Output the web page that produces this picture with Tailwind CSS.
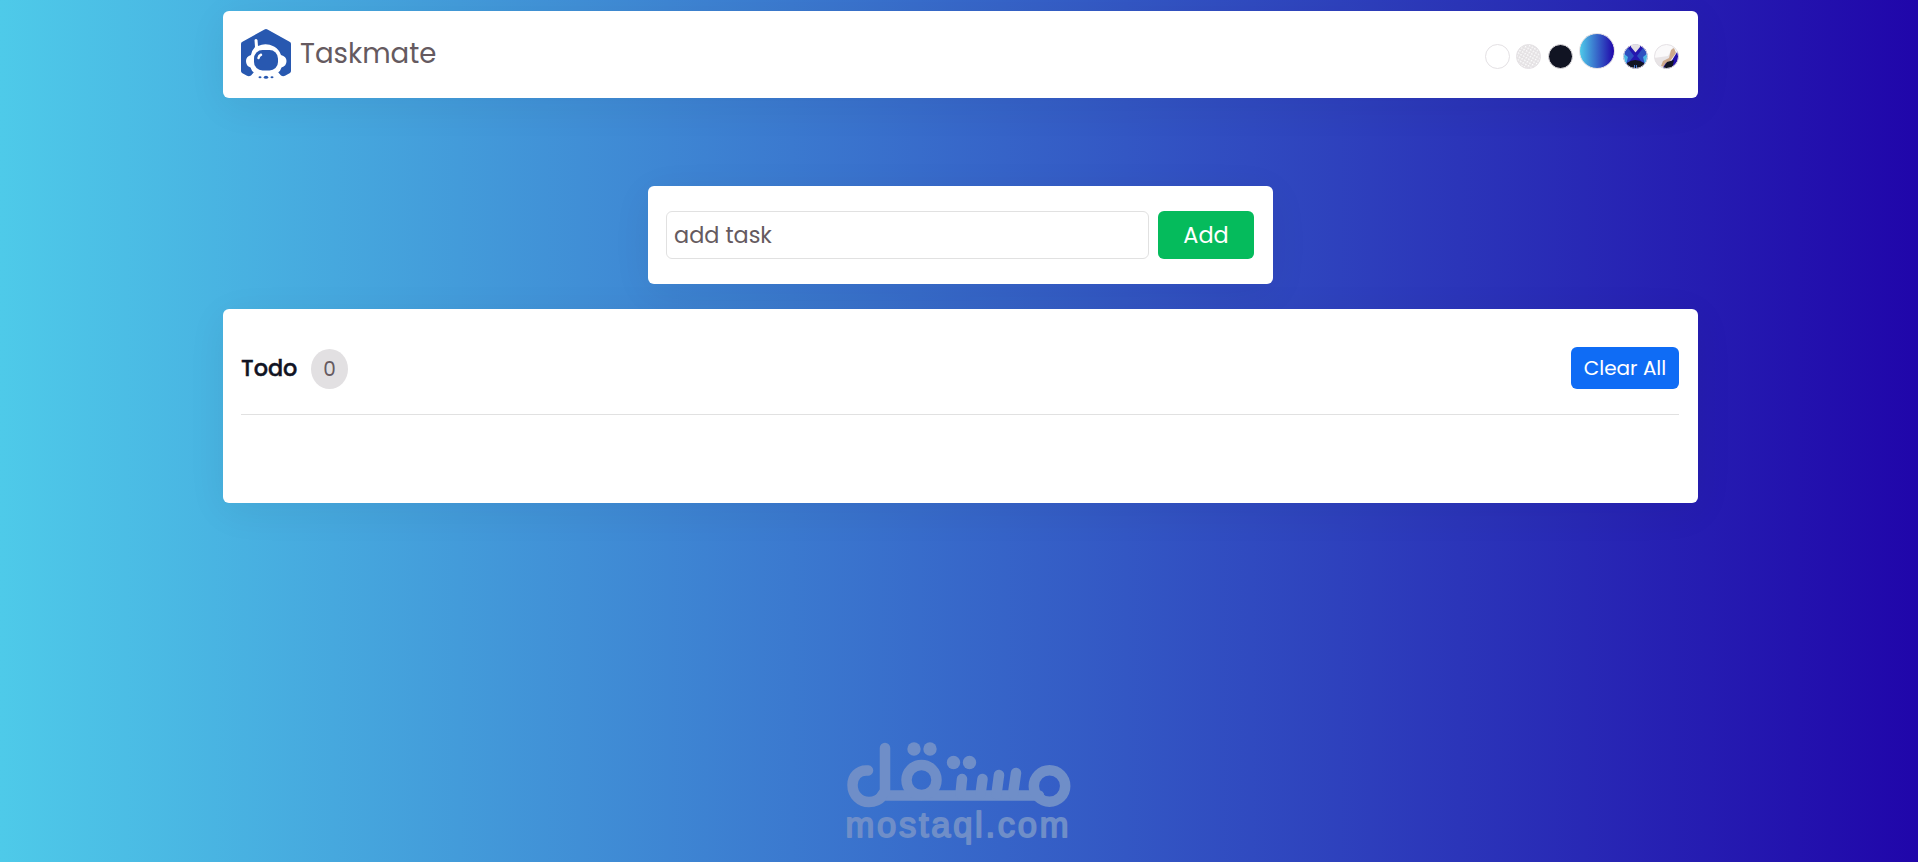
<!DOCTYPE html>
<html lang="en">
<head>
    <meta charset="UTF-8">
    <meta name="viewport" content="width=device-width, initial-scale=1.0">
    <title>Taskmate</title>
    <script src="https://cdn.jsdelivr.net/npm/@tailwindcss/browser@4"></script>
</head>
<body class="h-screen overflow-hidden bg-linear-to-r/srgb from-[#4ecae9] to-[#2006aa] pt-[11px] font-['Poppins','Inter',sans-serif]">
    <div class="ml-[223px] w-[1475px] flex flex-col">
        <!-- Header -->
        <header class="h-[87px] bg-white rounded-[6px] pl-[18px] pr-[19px] flex items-center justify-between shadow-[0_8px_40px_rgba(17,20,35,0.06)]">
            <div class="flex items-center pb-0.5">
                <svg class="w-[50px] h-[50px]" viewBox="0 0 50 50">
                    <path fill="#2858b0" d="M23.500 0.500 Q25 -0.300 26.500 0.500 L49 13 Q50 13.700 50 15 V42 Q50 43.200 49 43.900 L44 46.800 Q42 47.800 40 46.500 L36 42 H14 L10 46.500 Q8 47.800 6 46.800 L1 43.900 Q0 43.200 0 42 V15 Q0 13.700 1 13Z"/>
                    <path fill="#fff" d="M13.500 11 Q15 9 16.500 11 L17 17 Q25 13.500 33 17.500 Q38 20 40 26 Q45.500 27.500 45.500 32 Q45.500 37 40.500 38.500 Q39.500 42 37 43.500 L39 46.500 Q25 52 11 46.500 L13 43.500 Q10.500 42 9.500 38.500 Q5 37 5 32 Q5 27.500 10 26 Q11 21 14 18Z"/>
                    <rect x="13" y="21" width="24" height="20.500" rx="8.500" fill="#2858b0"/>
                    <path d="M17.500 29 Q18 26.500 20 25.800" fill="none" stroke="#fff" stroke-width="2.500" stroke-linecap="round"/>
                    <ellipse cx="19" cy="48.300" rx="1.500" ry="1" fill="#2858b0"/>
                    <ellipse cx="25" cy="48.300" rx="2.200" ry="1.500" fill="#2858b0"/>
                    <ellipse cx="31" cy="48.300" rx="1.500" ry="1" fill="#2858b0"/>
                </svg>
                <span class="ml-[9px] pt-px text-[27.6px] leading-none text-[#655a60]">Taskmate</span>
            </div>
            <!-- Theme swatches -->
            <div class="flex items-end gap-1.5 h-[38px] mb-[7px] pb-px">
                <span class="w-[25px] h-[25px] rounded-full border border-[#e4e1e4] bg-white"></span>
                <svg class="w-[25px] h-[25px]" viewBox="0 0 25 25">
                    <defs>
                        <pattern id="weave" width="3" height="3" patternUnits="userSpaceOnUse" patternTransform="rotate(30)">
                            <rect width="3" height="3" fill="#e4e1e3"/>
                            <rect width="1.500" height="1.500" fill="#fff"/>
                        </pattern>
                        <clipPath id="swatch"><circle cx="12.500" cy="12.500" r="12"/></clipPath>
                    </defs>
                    <circle cx="12.500" cy="12.500" r="12" fill="url(#weave)" stroke="#e4e1e4"/>
                </svg>
                <span class="w-[25px] h-[25px] ml-px rounded-full border border-[#e4e1e4] bg-[#111423]"></span>
                <span class="w-9 h-9 rounded-full border border-[#e4e1e4] bg-linear-to-r/srgb from-[#4ecae9] to-[#2006aa]"></span>
                <svg class="w-[25px] h-[25px] ml-0.5" viewBox="0 0 25 25">
                    <g clip-path="url(#swatch)">
                        <rect width="25" height="25" fill="#2108ab"/>
                        <path d="M0 0 H7 L12.500 10 L18 0 H25 V8 L17 14 L21 20 L19 25 H6 L4 20 L8 14 L0 8Z" fill="#2418b0"/>
                        <path d="M2 6 L5 4 L11 12 L6 18 L0 20 V8Z M23 6 L20 4 L14 12 L19 18 L25 20 V8Z" fill="#2d4fc0"/>
                        <path d="M0 9 L5 13 L3 21 H0Z M25 9 L20 13 L22 21 H25Z" fill="#4bb4e3"/>
                        <path d="M8 0 H17 V3 L12.500 8.500 L8 3Z" fill="#e4e1e4"/>
                        <path d="M4 19 Q12 13 21 19 V25 H4Z" fill="#111423"/>
                        <path d="M11.500 21 V24 M13.500 21 V24" stroke="#3d72cd"/>
                    </g>
                    <circle cx="12.500" cy="12.500" r="12" fill="none" stroke="#e4e1e4"/>
                </svg>
                <svg class="w-[25px] h-[25px]" viewBox="0 0 25 25">
                    <g clip-path="url(#swatch)">
                        <rect width="25" height="25" fill="#faf9fa"/>
                        <path d="M0 14 L14 12 L19 3 L22 8 L12 20 L7 25 L0 22Z" fill="#e8e4e6"/>
                        <path d="M17 6 L20 4 L22 9 L17 16 L11 23 L7 22 L9 17 L15 14Z" fill="#cda98c"/>
                        <path d="M25 5 L20 13 L17 18 L12 19 L8 25 H25Z" fill="#2210aa"/>
                        <path d="M20 16 L13 18 L9 25 H18Z" fill="#111423"/>
                    </g>
                    <circle cx="12.500" cy="12.500" r="12" fill="none" stroke="#e4e1e4"/>
                </svg>
            </div>
        </header>

        <!-- Add task -->
        <form class="mt-[88px] ml-[425px] w-[625px] h-[98px] bg-white rounded-[6px] px-[18px] flex items-center shadow-[0_8px_40px_rgba(17,20,35,0.06)]">
            <input type="text" placeholder="add task" class="w-[483px] h-12 border border-[#e1e1e1] rounded-[6px] px-[7px] text-[22.4px] text-[#655a60] placeholder:text-[#655a60]">
            <button type="button" class="ml-[9px] w-24 h-12 pt-0.5 rounded-[6px] bg-[#05bb5c] text-white text-[22.4px]">Add</button>
        </form>

        <!-- Task list -->
        <section class="mt-[25px] h-[194px] bg-white rounded-[6px] pl-[18px] pr-[19px] pt-[38px] shadow-[0_8px_40px_rgba(17,20,35,0.06)]">
            <div class="h-[68px] border-b border-[#e1e1e1] flex items-start justify-between">
                <div class="flex items-center h-[42px]">
                    <span class="w-[58px] pt-0.5 text-[22.4px] font-medium text-[#111423] [-webkit-text-stroke:0.4px_#111423]">Todo</span>
                    <span class="ml-3 mt-0.5 w-[37px] h-10 rounded-[50%] bg-[#e2e0e2] text-[#655a60] text-[20px] flex items-center justify-center">0</span>
                </div>
                <button type="button" class="w-[108px] h-[42px] rounded-[6px] bg-[#0f6cf5] text-white text-[20px]">Clear All</button>
            </div>
        </section>
    </div>

    <!-- Watermark -->
    <svg class="absolute left-[846px] top-[741px] w-[228px] h-[108px]" viewBox="0 0 228 108">
        <g fill="none" stroke="#6f8ec8" stroke-width="10.500" stroke-linecap="round">
            <path d="M22 29.500 C12 28.500 6.500 36 6.500 44 C6.500 54 14 61 23 61 C30 61 34 58 37 54.500 H193"/>
            <path d="M39 7 V50 L35 56"/>
            <circle cx="75.500" cy="39" r="15"/>
            <circle cx="203.500" cy="45" r="15.700"/>
            <path d="M114.500 53 L116 38 M134.500 53 L136.500 38 M150.500 53 L153 34 M167 53 L170 32"/>
        </g>
        <g fill="#6f8ec8">
            <circle cx="68" cy="8" r="6.700"/>
            <circle cx="84" cy="8" r="6.700"/>
            <circle cx="107.500" cy="21.500" r="6.700"/>
            <circle cx="123.500" cy="21.500" r="6.700"/>
            <text x="-0.500" y="95.500" textLength="225" font-family="Liberation Sans" font-size="34.500" letter-spacing="2" stroke="#6f8ec8" stroke-width="1.800" stroke-linejoin="round">mostaql.com</text>
        </g>
    </svg>
</body>
</html>
